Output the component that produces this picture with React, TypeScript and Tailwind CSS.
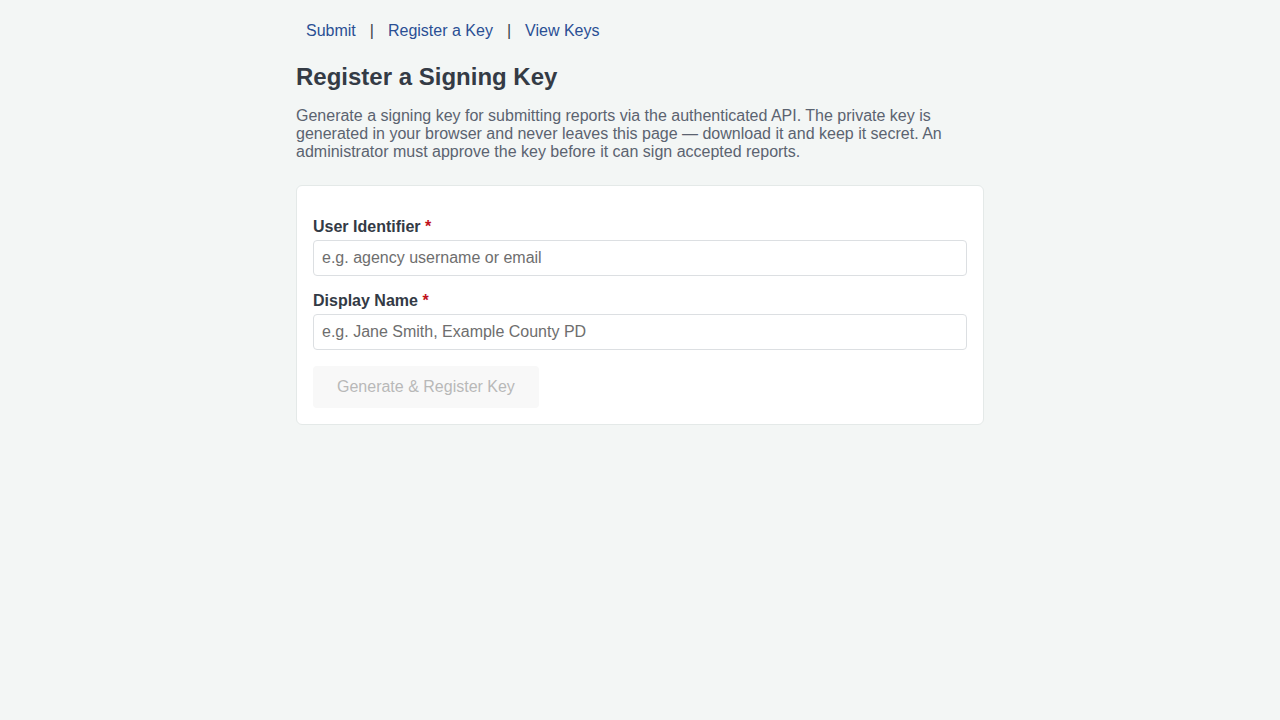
import React from "react";

export default function App() {
  return (
    <div className="min-h-screen w-full bg-[#f3f6f5]" style={{ fontFamily: '"Liberation Sans", Arial, sans-serif' }}>
      <div className="mx-auto w-[688px] pt-[22px]">
        <nav className="flex items-center text-[16px] leading-[18px]">
          <a href="#" className="px-[10px] text-[#2a4f94]">Submit</a>
          <span className="px-[4px] text-[#3a3f48]">|</span>
          <a href="#" className="px-[10px] text-[#2a4f94]">Register a Key</a>
          <span className="px-[4px] text-[#3a3f48]">|</span>
          <a href="#" className="px-[10px] text-[#2a4f94]">View Keys</a>
        </nav>
        <h1 className="mt-[23px] text-[24px] font-bold leading-[28px] text-[#343b45]">Register a Signing Key</h1>
        <p className="mt-[16px] text-[16px] leading-[18px] text-[#5b6370]">
          Generate a signing key for submitting reports via the authenticated API. The private key is generated in your browser and never leaves this page — download it and keep it secret. An administrator must approve the key before it can sign accepted reports.
        </p>
        <div className="mt-[24px] rounded-[6px] border border-[#e4e9e8] bg-white px-4 pt-[32px] pb-4">
          <label className="block text-[16px] font-bold leading-[18px] text-[#333a45]">
            User Identifier <span className="text-[#c0121c]">*</span>
          </label>
          <input
            className="mt-[4px] block h-[36px] w-full rounded-[4px] border border-[#dcdfe2] px-2 text-[16px] text-[#333] placeholder:text-[#6e6e6e] outline-none"
            placeholder="e.g. agency username or email"
          />
          <label className="mt-[16px] block text-[16px] font-bold leading-[18px] text-[#333a45]">
            Display Name <span className="text-[#c0121c]">*</span>
          </label>
          <input
            className="mt-[4px] block h-[36px] w-full rounded-[4px] border border-[#dcdfe2] px-2 text-[16px] text-[#333] placeholder:text-[#6e6e6e] outline-none"
            placeholder="e.g. Jane Smith, Example County PD"
          />
          <button
            disabled
            className="mt-[16px] h-[42px] rounded-[4px] bg-[#f8f8f8] px-6 text-[16px] text-[#b8b8b8]"
          >
            Generate &amp; Register Key
          </button>
        </div>
      </div>
    </div>
  );
}
